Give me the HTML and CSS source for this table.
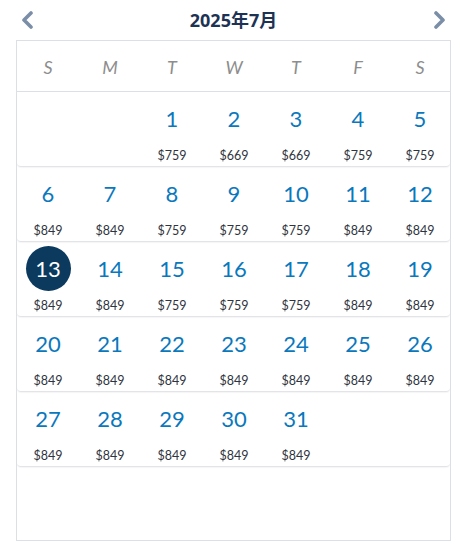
FILE: index.html
```html
<!DOCTYPE html>
<html>
<head>
<meta charset="utf-8">
<link rel="stylesheet" href="styles.css">
</head>
<body>
<div class="header">
  <button class="nav"><svg width="14" height="18" viewBox="0 0 14 18"><path d="M11 2 L4 9 L11 16" fill="none" stroke="#7b8ea8" stroke-width="3.6" stroke-linecap="round" stroke-linejoin="round"/></svg></button>
  <div class="title">2025年7月</div>
  <button class="nav"><svg width="14" height="18" viewBox="0 0 14 18"><path d="M3 2 L10 9 L3 16" fill="none" stroke="#7b8ea8" stroke-width="3.6" stroke-linecap="round" stroke-linejoin="round"/></svg></button>
</div>
<div class="cal">
  <div class="dow"><span>S</span><span>M</span><span>T</span><span>W</span><span>T</span><span>F</span><span>S</span></div>
  <div class="week">
    <div class="day empty"></div><div class="day empty"></div>
    <div class="day"><span class="num">1</span><span class="price">$759</span></div>
    <div class="day"><span class="num">2</span><span class="price">$669</span></div>
    <div class="day"><span class="num">3</span><span class="price">$669</span></div>
    <div class="day"><span class="num">4</span><span class="price">$759</span></div>
    <div class="day"><span class="num">5</span><span class="price">$759</span></div>
  </div>
  <div class="week">
    <div class="day"><span class="num">6</span><span class="price">$849</span></div>
    <div class="day"><span class="num">7</span><span class="price">$849</span></div>
    <div class="day"><span class="num">8</span><span class="price">$759</span></div>
    <div class="day"><span class="num">9</span><span class="price">$759</span></div>
    <div class="day"><span class="num">10</span><span class="price">$759</span></div>
    <div class="day"><span class="num">11</span><span class="price">$849</span></div>
    <div class="day"><span class="num">12</span><span class="price">$849</span></div>
  </div>
  <div class="week">
    <div class="day selected"><span class="num">13</span><span class="price">$849</span></div>
    <div class="day"><span class="num">14</span><span class="price">$849</span></div>
    <div class="day"><span class="num">15</span><span class="price">$759</span></div>
    <div class="day"><span class="num">16</span><span class="price">$759</span></div>
    <div class="day"><span class="num">17</span><span class="price">$759</span></div>
    <div class="day"><span class="num">18</span><span class="price">$849</span></div>
    <div class="day"><span class="num">19</span><span class="price">$849</span></div>
  </div>
  <div class="week">
    <div class="day"><span class="num">20</span><span class="price">$849</span></div>
    <div class="day"><span class="num">21</span><span class="price">$849</span></div>
    <div class="day"><span class="num">22</span><span class="price">$849</span></div>
    <div class="day"><span class="num">23</span><span class="price">$849</span></div>
    <div class="day"><span class="num">24</span><span class="price">$849</span></div>
    <div class="day"><span class="num">25</span><span class="price">$849</span></div>
    <div class="day"><span class="num">26</span><span class="price">$849</span></div>
  </div>
  <div class="week">
    <div class="day"><span class="num">27</span><span class="price">$849</span></div>
    <div class="day"><span class="num">28</span><span class="price">$849</span></div>
    <div class="day"><span class="num">29</span><span class="price">$849</span></div>
    <div class="day"><span class="num">30</span><span class="price">$849</span></div>
    <div class="day"><span class="num">31</span><span class="price">$849</span></div>
    <div class="day empty"></div><div class="day empty"></div>
  </div>
</div>
</body>
</html>
```
FILE: styles.css
```css
html, body { margin: 0; padding: 0; background: #fff; }
body { font-family: Lato, "Noto Sans", "Noto Sans CJK SC", sans-serif; width: 467px; }
.header {
  height: 40px;
  display: flex;
  align-items: center;
  justify-content: space-between;
  padding: 0 20px 0 20px;
  box-sizing: border-box;
}
.nav {
  border: 0; background: none; padding: 0; margin: 0;
  width: 14px; height: 18px; display: flex;
}
.title {
  font-family: "Noto Sans", "Noto Sans CJK SC", sans-serif;
  font-weight: 700;
  font-size: 18px;
  color: #1d3354;
  margin-top: -3px;
}
.cal {
  margin-left: 16px;
  width: 435px;
  height: 501px;
  box-sizing: border-box;
  border: 1px solid #dcdfe4;
}
.dow {
  display: grid;
  grid-template-columns: repeat(7, 62px);
  height: 50px;
  border-bottom: 1px solid #dcdfe4;
  align-items: center;
  justify-items: center;
}
.dow span {
  font-style: italic;
  font-size: 18px;
  color: #8d8d8d;
  margin-top: 1px;
}
.week {
  display: grid;
  grid-template-columns: repeat(7, 62px);
  height: 74px;
  border-bottom: 1px solid #e2e4e7;
  border-radius: 0 0 4px 4px;
  box-shadow: 0 1px 1px rgba(0,0,0,0.04);
}
.day {
  display: flex;
  flex-direction: column;
  align-items: center;
}
.num {
  width: 45px; height: 45px;
  margin-top: 4px;
  border-radius: 50%;
  display: flex; align-items: center; justify-content: center;
  font-size: 22px;
  color: #0a78bd;
}
.selected .num { background: #0b3a5e; color: #fff; }
.price {
  margin-top: 7px;
  font-size: 12.5px;
  color: #2f3440;
}
```
